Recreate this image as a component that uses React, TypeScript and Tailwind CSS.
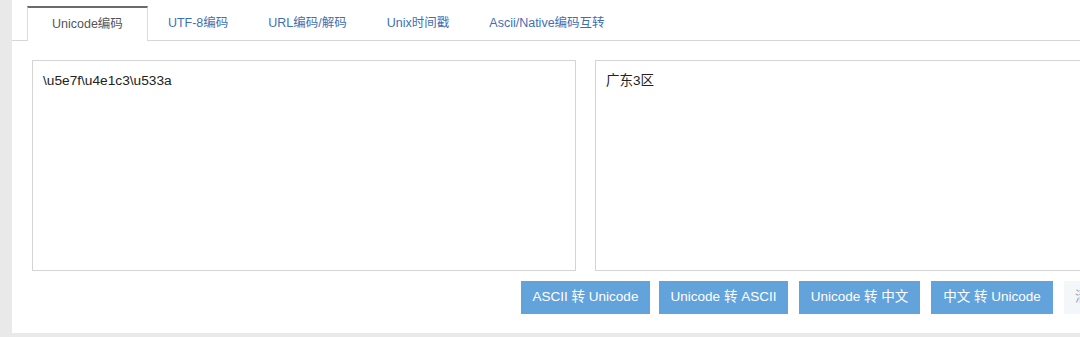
import React from "react";

const tabs = ["UTF-8编码", "URL编码/解码", "Unix时间戳", "Ascii/Native编码互转"];

const areaCls =
  "w-[544px] h-[211px] shrink-0 resize-none border border-[#d4d4d4] p-[10px] leading-[20px] text-[#222] outline-none";
const btnCls = "h-[33px] bg-[#62a3dc] text-white text-[13.5px] whitespace-nowrap";

export default function App() {
  return (
    <div className="flex w-[1080px] h-[337px] bg-[#e9e9e9] overflow-hidden font-['Liberation_Sans','Noto_Sans_CJK_SC',sans-serif]">
      <div className="ml-[12px] w-[1147px] shrink-0 h-[333px] bg-white flex flex-col">
        <div className="flex items-end h-[41px] pl-[15px] border-b border-[#d6d6d6]">
          <div className="-mb-px h-[35px] flex items-center px-[24px] bg-white border-t-2 border-t-[#6b6b6b] border-x border-x-[#dcdcdc] text-[12.5px] text-[#555]">
            Unicode编码
          </div>
          {tabs.map((t) => (
            <div key={t} className="h-[34px] flex items-center px-[20px] text-[12.5px] text-[#3f6fb3]">
              {t}
            </div>
          ))}
        </div>
        <div className="px-[20px] pt-[19px]">
          <div className="flex gap-[19px]">
            <textarea readOnly defaultValue={"\\u5e7f\\u4e1c3\\u533a"} className={`${areaCls} text-[13.7px]`} />
            <textarea readOnly defaultValue={"广东3区"} className={`${areaCls} text-[13.5px]`} />
          </div>
          <div className="flex mt-[10px] pl-[489px]">
            <button className={`${btnCls} w-[129px]`}>ASCII 转 Unicode</button>
            <button className={`${btnCls} ml-[9px] w-[129px]`}>Unicode 转 ASCII</button>
            <button className={`${btnCls} ml-[11px] w-[121px]`}>Unicode 转 中文</button>
            <button className={`${btnCls} ml-[11px] w-[122px]`}>中文 转 Unicode</button>
            <button className="ml-[11px] h-[33px] w-[75px] pl-[11px] text-left bg-[#f4f7fa] text-[#8fa6bb] text-[13.5px] whitespace-nowrap">
              清空
            </button>
          </div>
        </div>
      </div>
    </div>
  );
}
